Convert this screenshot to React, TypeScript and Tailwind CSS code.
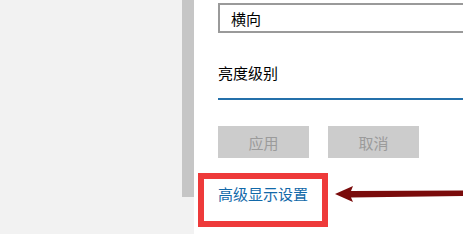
import React from "react";

export default function App() {
  const font = { fontFamily: '"Noto Sans CJK SC", "Microsoft YaHei", sans-serif' };
  return (
    <div className="relative flex h-[234px] w-[463px] overflow-hidden bg-white" style={font}>
      <div className="h-full w-[182px] bg-[#f2f2f2]" />
      <div className="flex h-full w-[12px] flex-col bg-[#f2f2f2]">
        <div className="h-[197px] bg-[#c6c6c6]" />
      </div>
      <div className="flex min-w-0 flex-1 flex-col overflow-hidden pl-[24px]">
        <div className="mt-[3px] flex h-[30px] w-[300px] shrink-0 items-center border-2 border-[#9a9a9a] pl-[11px] text-[15px] leading-none text-black">
          横向
        </div>
        <div className="mt-[30px] text-[15px] leading-[20px] text-black">亮度级别</div>
        <div className="mt-[15px] h-[2px] w-full bg-[#2470aa]" />
        <div className="mt-[26px] flex gap-[19px]">
          <div className="flex h-[32px] w-[91px] items-center justify-center bg-[#cccccc] text-[15px] leading-none text-[#9b9b9b]">
            应用
          </div>
          <div className="flex h-[32px] w-[91px] items-center justify-center bg-[#cccccc] text-[15px] leading-none text-[#9b9b9b]">
            取消
          </div>
        </div>
        <div className="mt-[26px] text-[15px] leading-[20px] text-[#1269a9]">高级显示设置</div>
      </div>
      <div className="pointer-events-none absolute left-[198px] top-[173px] h-[54px] w-[130px] border-[6px] border-[#ee3a3a]" />
      <svg className="pointer-events-none absolute left-0 top-0" width="463" height="234" viewBox="0 0 463 234">
        <polygon points="335,194 353,186 351,191 463,190.5 463,196 351,197.5 353,202" fill="#7a0b0b" />
      </svg>
    </div>
  );
}
